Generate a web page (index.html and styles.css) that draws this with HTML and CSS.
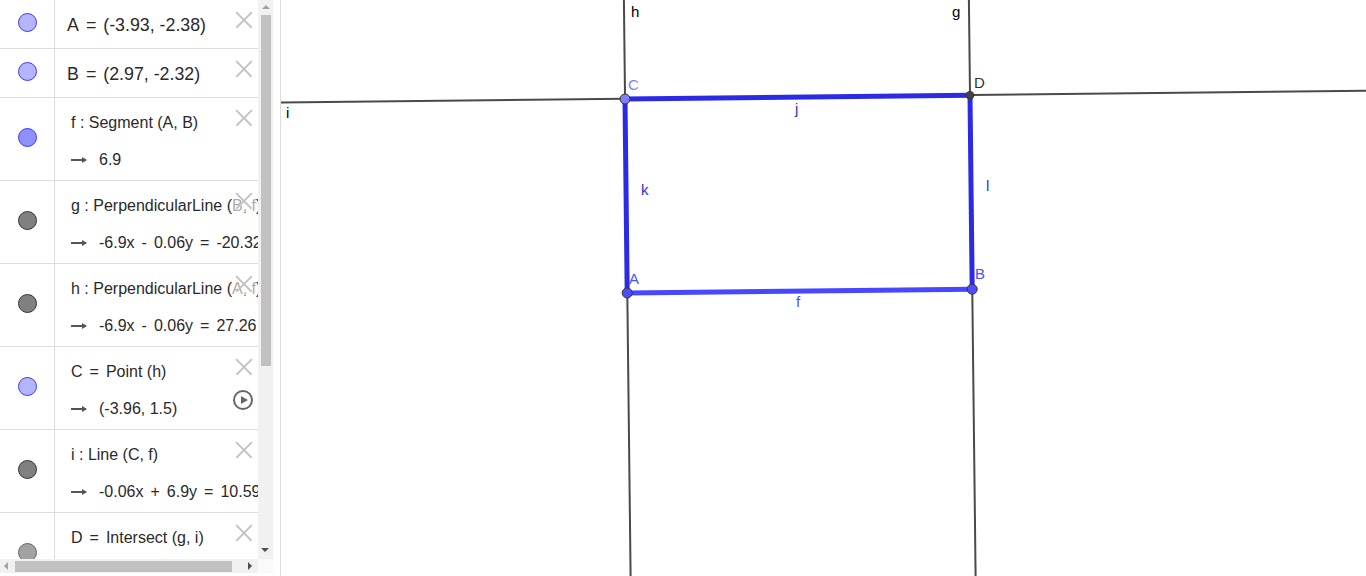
FILE: index.html
```html
<!DOCTYPE html>
<html>
<head>
<meta charset="utf-8">
<link rel="stylesheet" href="styles.css">
</head>
<body>
<div class="app">
  <div class="algebra">
    <div class="list">
      <div class="row short">
        <div class="marble-col"><span class="marble m-light"></span></div>
        <div class="content indep"><div class="line">A<span class="op">=</span>(-3.93, -2.38)</div></div>
        <span class="close"></span>
      </div>
      <div class="row short">
        <div class="marble-col"><span class="marble m-light"></span></div>
        <div class="content indep"><div class="line">B<span class="op">=</span>(2.97, -2.32)</div></div>
        <span class="close"></span>
      </div>
      <div class="row">
        <div class="marble-col"><span class="marble m-blue"></span></div>
        <div class="content">
          <div class="line">f : Segment (A, B)</div>
          <div class="line out"><span class="arrow"></span>6.9</div>
        </div>
        <span class="close"></span>
      </div>
      <div class="row">
        <div class="marble-col"><span class="marble m-gray"></span></div>
        <div class="content">
          <div class="line">g : PerpendicularLine (B, f)</div>
          <div class="line out"><span class="arrow"></span>-6.9x<span class="op">-</span>0.06y<span class="op">=</span>-20.32</div>
        </div>
        <span class="close over"></span>
      </div>
      <div class="row">
        <div class="marble-col"><span class="marble m-gray"></span></div>
        <div class="content">
          <div class="line">h : PerpendicularLine (A, f)</div>
          <div class="line out"><span class="arrow"></span>-6.9x<span class="op">-</span>0.06y<span class="op">=</span>27.26</div>
        </div>
        <span class="close over"></span>
      </div>
      <div class="row">
        <div class="marble-col"><span class="marble m-light"></span></div>
        <div class="content">
          <div class="line">C<span class="op">=</span>Point (h)</div>
          <div class="line out"><span class="arrow"></span>(-3.96, 1.5)</div>
        </div>
        <span class="close"></span>
        <span class="play"></span>
      </div>
      <div class="row">
        <div class="marble-col"><span class="marble m-gray"></span></div>
        <div class="content">
          <div class="line">i : Line (C, f)</div>
          <div class="line out"><span class="arrow"></span>-0.06x<span class="op">+</span>6.9y<span class="op">=</span>10.59</div>
        </div>
        <span class="close"></span>
      </div>
      <div class="row">
        <div class="marble-col"><span class="marble m-lgray"></span></div>
        <div class="content">
          <div class="line">D<span class="op">=</span>Intersect (g, i)</div>
        </div>
        <span class="close"></span>
      </div>
    </div>
    <div class="vscroll">
      <span class="tri tri-up"></span>
      <span class="vthumb"></span>
      <span class="tri tri-down"></span>
    </div>
    <div class="hscroll">
      <span class="tri tri-left"></span>
      <span class="hthumb"></span>
      <span class="tri tri-right"></span>
    </div>
    <div class="corner"></div>
  </div>
  <div class="divider"></div>
  <div class="canvas">
    <svg class="graphics" viewBox="281 0 1085 576" width="1085" height="576">
      <g stroke="#4a4a4a" stroke-width="2" fill="none">
        <line x1="280" y1="102.6" x2="1366" y2="90.8"/>
        <line x1="623.9" y1="0" x2="630.6" y2="576"/>
        <line x1="968.9" y1="0" x2="975.6" y2="576"/>
      </g>
      <g stroke-width="5" stroke-linecap="butt">
        <line x1="625" y1="99" x2="970" y2="95.2" stroke="#2b2be6"/>
        <line x1="625" y1="99" x2="627.2" y2="293" stroke="#2b2be6"/>
        <line x1="970" y1="95.2" x2="972.2" y2="289.2" stroke="#2b2be6"/>
        <line x1="627.2" y1="293" x2="972.2" y2="289.2" stroke="#4747ff"/>
      </g>
      <g stroke="#333" stroke-width="1">
        <circle cx="625" cy="99" r="5" fill="#7f7fff"/>
        <circle cx="970" cy="95.2" r="3.8" fill="#444"/>
        <circle cx="627.2" cy="293" r="5" fill="#4d4dff"/>
        <circle cx="972.2" cy="289.2" r="5" fill="#4d4dff"/>
      </g>
      <g class="lbl">
        <text x="631" y="17" fill="#000">h</text>
        <text x="952" y="17" fill="#000">g</text>
        <text x="286" y="118" fill="#000">i</text>
        <text x="628" y="90" fill="#7f7fff">C</text>
        <text x="974" y="88" fill="#333">D</text>
        <text x="795" y="114" fill="#2b2be6">j</text>
        <text x="641" y="195" fill="#2b2be6">k</text>
        <text x="986" y="191" fill="#2b2be6">l</text>
        <text x="629" y="284" fill="#4d4dff">A</text>
        <text x="975" y="279" fill="#4d4dff">B</text>
        <text x="796" y="307" fill="#4d4dff">f</text>
      </g>
    </svg>
  </div>
</div>
</body>
</html>
```
FILE: styles.css
```css
html, body {
  margin: 0;
  padding: 0;
  background: #fff;
}
.app {
  display: flex;
  width: 1366px;
  height: 576px;
  overflow: hidden;
  font-family: "Liberation Sans", Arial, sans-serif;
  color: #2a2a2a;
}
.algebra {
  display: grid;
  grid-template-columns: 258px 15px;
  grid-template-rows: 559px 14px 3px;
  width: 273px;
  height: 576px;
  flex: none;
}
.list {
  grid-column: 1;
  grid-row: 1;
  overflow: hidden;
  width: 258px;
}
.row {
  position: relative;
  display: flex;
  height: 82px;
  border-bottom: 1px solid #dddddd;
  width: 258px;
  overflow: hidden;
}
.row.short {
  height: 48px;
}
.marble-col {
  width: 55px;
  flex: none;
  border-right: 1px solid #dddddd;
  display: flex;
  align-items: center;
  justify-content: center;
  padding-bottom: 4px;
  box-sizing: border-box;
}
.marble {
  display: block;
  width: 19px;
  height: 19px;
  border-radius: 50%;
  box-sizing: border-box;
  margin-left: 1px;
}
.m-light { background: #b4b4ff; border: 1px solid #3a3aff; }
.m-blue { background: #9090ff; border: 1px solid #3a3aff; }
.m-gray { background: #808080; border: 1px solid #333; }
.m-lgray { background: #a2a2a2; border: 1px solid #666; }
.content {
  padding: 14px 0 0 16px;
  white-space: nowrap;
  font-size: 16px;
}
.content.indep {
  padding-left: 12px;
  font-size: 17.8px;
}
.op {
  display: inline-block;
  margin: 0 7px;
}
.line {
  height: 22px;
  line-height: 22px;
}
.line.out {
  margin-top: 15px;
  display: flex;
  align-items: center;
}
.arrow {
  position: relative;
  display: inline-block;
  width: 15px;
  height: 1.6px;
  background: #555;
  margin-right: 13px;
}
.arrow::after {
  content: "";
  position: absolute;
  right: -1px;
  top: -2.4px;
  border-left: 5px solid #555;
  border-top: 3.2px solid transparent;
  border-bottom: 3.2px solid transparent;
}
.close {
  position: absolute;
  left: 232px;
  top: 9px;
  width: 24px;
  height: 22px;
  background: rgba(255,255,255,0.6);
}
.row.short .close { background: transparent; }
.close::before, .close::after {
  content: "";
  position: absolute;
  left: 1px;
  top: 10px;
  width: 22px;
  height: 1.6px;
  background: #c4c4c4;
  transform: rotate(45deg);
}
.close::after {
  transform: rotate(-45deg);
}
.play {
  position: absolute;
  left: 233px;
  top: 43px;
  width: 20px;
  height: 20px;
  border: 2px solid #666;
  border-radius: 50%;
  box-sizing: border-box;
}
.play::after {
  content: "";
  position: absolute;
  left: 6px;
  top: 4px;
  border-left: 7px solid #666;
  border-top: 4px solid transparent;
  border-bottom: 4px solid transparent;
}
.vscroll {
  grid-column: 2;
  grid-row: 1;
  position: relative;
  background: #f1f1f1;
}
.vthumb {
  position: absolute;
  left: 3px;
  top: 15px;
  width: 10px;
  height: 351px;
  background: #c1c1c1;
}
.hscroll {
  grid-column: 1;
  grid-row: 2;
  position: relative;
  background: #f1f1f1;
}
.hthumb {
  position: absolute;
  left: 15px;
  top: 2px;
  width: 217px;
  height: 11px;
  background: #c1c1c1;
}
.corner {
  grid-column: 2;
  grid-row: 2;
  background: #fafafa;
}
.tri {
  position: absolute;
  width: 0;
  height: 0;
}
.tri-up {
  left: 4px;
  top: 5px;
  border-bottom: 4px solid #a3a3a3;
  border-left: 4px solid transparent;
  border-right: 4px solid transparent;
}
.tri-down {
  left: 3px;
  top: 548px;
  border-top: 4px solid #505050;
  border-left: 4px solid transparent;
  border-right: 4px solid transparent;
}
.tri-left {
  left: 4px;
  top: 3px;
  border-right: 4px solid #a3a3a3;
  border-top: 4px solid transparent;
  border-bottom: 4px solid transparent;
}
.tri-right {
  left: 248px;
  top: 3px;
  border-left: 4px solid #505050;
  border-top: 4px solid transparent;
  border-bottom: 4px solid transparent;
}
.divider {
  width: 7px;
  flex: none;
  border-right: 1px solid #dedede;
}
.canvas {
  flex: 1;
  height: 576px;
  overflow: hidden;
}
.graphics {
  display: block;
}
.lbl text {
  font-family: "Liberation Sans", Arial, sans-serif;
  font-size: 15px;
}
```
